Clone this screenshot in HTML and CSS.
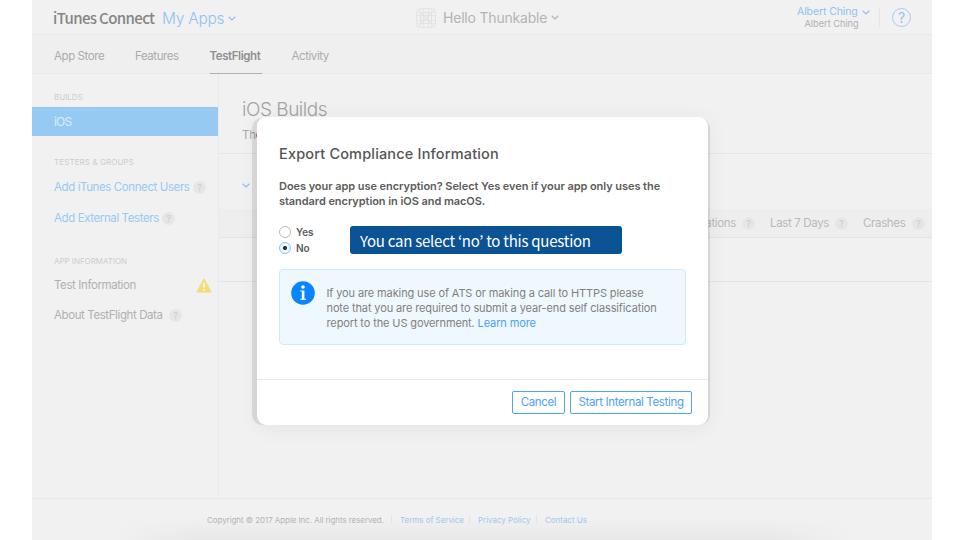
FILE: index.html
```html
<!DOCTYPE html>
<html lang="en">
<head>
<meta charset="utf-8">
<title>iTunes Connect</title>
<link rel="stylesheet" href="styles.css">
</head>
<body>
<div class="page">
  <header class="top">
    <div class="brand"><span class="logo">iTunes Connect</span><span class="apps">My Apps</span><svg class="chev blue" viewBox="0 0 8 5"><path d="M.7.8 4 3.9 7.3.8"/></svg></div>
    <div class="app">
      <svg class="appicon" viewBox="0 0 20 20"><rect x=".5" y=".5" width="19" height="19" rx="4"/><path d="M4.5 1v18M7.5 1v18M12.5 1v18M15.5 1v18M1 4.5h18M1 7.5h18M1 12.5h18M1 15.5h18M2 2l16 16M18 2 2 18" opacity=".7"/><circle cx="10" cy="10" r="5.5"/><circle cx="10" cy="10" r="2.2"/></svg>
      <span class="appname">Hello Thunkable</span><svg class="chev grey" viewBox="0 0 8 5"><path d="M.7.8 4 3.9 7.3.8"/></svg>
    </div>
    <div class="account">
      <div class="who"><div class="user"><span>Albert Ching</span><svg class="chev blue" viewBox="0 0 8 5"><path d="M.7.8 4 3.9 7.3.8"/></svg></div><div class="team">Albert Ching</div></div>
      <i class="rule"></i><span class="help">?</span>
    </div>
  </header>
  <nav class="tabs"><a class="t1">App Store</a><a class="t2">Features</a><a class="t3 on">TestFlight</a><a class="t4">Activity</a></nav>
  <div class="body">
    <aside class="side">
      <h4 class="h-builds">BUILDS</h4>
      <div class="active">iOS</div>
      <h4 class="h-test">TESTERS &amp; GROUPS</h4>
      <div class="item link i1"><span>Add iTunes Connect Users</span><b class="q">?</b></div>
      <div class="item link i2"><span>Add External Testers</span><b class="q">?</b></div>
      <h4 class="h-info">APP INFORMATION</h4>
      <div class="item i3"><span>Test Information</span><svg class="warn" viewBox="0 0 16 15"><path d="M8 1 15 14H1Z" fill="#f2dc7c" stroke="#f2dc7c" stroke-width="1.2" stroke-linejoin="round"/><path d="M8 4.8v4.6M8 11v1.7" stroke="#fff" stroke-width="1.4"/></svg></div>
      <div class="item i4"><span>About TestFlight Data</span><b class="q">?</b></div>
    </aside>
    <main class="main">
      <div class="intro"><h1>iOS Builds</h1><p>Th<span class="dark">e</span></p></div>
      <div class="group"><svg class="chev blue" viewBox="0 0 8 5"><path d="M.7.8 4 3.9 7.3.8"/></svg></div>
      <div class="thead"><span class="c1">Installations</span><b class="q">?</b><span class="c2">Last 7 Days</span><b class="q">?</b><span class="c3">Crashes</span><b class="q">?</b></div>
      <div class="row"></div>
    </main>
  </div>
  <footer class="foot"><span class="f1">Copyright © 2017 Apple Inc. All rights reserved.</span><a class="f2">Terms of Service</a><a class="f3">Privacy Policy</a><a class="f4">Contact Us</a></footer>
</div>
<div class="ghost"></div>
<section class="modal">
  <div class="content">
    <h2>Export Compliance Information</h2>
    <div class="ask"><div class="a1">Does your app use encryption? Select Yes even if your app only uses the</div><div class="a2">standard encryption in iOS and macOS.</div></div>
    <div class="choice">
      <div class="radios">
        <div class="opt"><i class="radio"></i><span>Yes</span></div>
        <div class="opt"><i class="radio sel"></i><span>No</span></div>
      </div>
      <div class="callout"><span>You can select ‘no’ to this question</span></div>
    </div>
    <div class="note">
      <svg class="info" viewBox="0 0 24 24"><circle cx="12" cy="12" r="11.8" fill="#0a84ff"/><circle cx="12" cy="6" r="1.8" fill="#fff"/><path d="M9.4 9.4h4v8.4h1.6v1H9.2v-1h1.6v-7.4H9.4Z" fill="#fff"/></svg>
      <div class="lines"><div class="n1">If you are making use of ATS or making a call to HTTPS please</div><div class="n2">note that you are required to submit a year-end self classification</div><div class="n3">report to the US government. <a>Learn more</a></div></div>
    </div>
  </div>
  <div class="actions"><button class="b1">Cancel</button><button class="b2">Start Internal Testing</button></div>
</section>
</body>
</html>
```

FILE: styles.css
```css
* { box-sizing: border-box; }
body { margin: 0; width: 960px; height: 540px; overflow: hidden; background: #fff; font-family: Inter, "Liberation Sans", sans-serif; color: #a9a9a9; position: relative; }
h1, h2, h4, p { margin: 0; font-weight: 400; }
span, a, div { white-space: nowrap; }
.page { margin-left: 32px; width: 900px; height: 540px; background: #f1f1f1; display: flex; flex-direction: column; }
.chev { width: 8px; height: 5px; fill: none; stroke-width: 1.2; flex: none; }
.blue { stroke: #8fc1f3; }
.grey { stroke: #b4b4b4; }

.top { height: 35px; border-bottom: 1px solid #e9e9e9; display: grid; grid-template-columns: 384px 340px 1fr; flex: none; }
.brand { display: flex; align-items: center; padding: 2px 0 0 21px; }
.logo { font: 500 15px/20px "Noto Sans CJK KR", sans-serif; color: #858585; letter-spacing: -.62px; width: 109px; }
.apps { font-size: 15.5px; font-weight: 300; color: #8fc1f3; width: 66px; letter-spacing: -.25px; }
.app { display: flex; align-items: center; padding-top: 1px; }
.appicon { width: 20px; height: 20px; fill: none; stroke: #dcdcdc; stroke-width: .7; margin-right: 7px; }
.appname { font-size: 14px; color: #b4b4b4; width: 108px; letter-spacing: -.2px; }
.account { display: flex; align-items: center; padding: 1px 0 0 41px; }
.who { width: 73px; }
.user { display: flex; align-items: center; gap: 4px; font-size: 10.5px; line-height: 12px; color: #8fc1f3; letter-spacing: -.1px; }
.team { font-size: 9.2px; line-height: 11px; padding-left: 7.5px; color: #b0b0b0; }
.rule { width: 1px; height: 19px; background: #e6e6e6; margin-left: 9px; }
.help { width: 19px; height: 19px; border: 1px solid #a4cdf5; border-radius: 50%; color: #8fc1f3; font-size: 14px; line-height: 17px; text-align: center; margin-left: 12px; }

.tabs { height: 39px; flex: none; border-bottom: 1px solid #e7e7e7; background: #efefef; display: flex; padding-left: 22px; font-size: 11.5px; line-height: 42px; color: #ababab; letter-spacing: -.42px; }
.tabs a { height: 39px; }
.t1 { width: 81px; } .t2 { width: 74.5px; }
.t3 { width: 52px; margin-right: 30px; }
.on { color: #909090; font-weight: 600; border-bottom: 1px solid #b0b0b0; }

.body { flex: none; height: 425px; display: flex; border-bottom: 1px solid #e8e8e8; padding-bottom: 3px; }
.side { width: 187px; border-right: 1px solid #e9e9e9; display: flex; flex-direction: column; }
.side h4 { font-size: 8px; line-height: 12px; padding-left: 22px; color: #cdcdcd; flex: none; }
.h-builds { margin-top: 17px; }
.active { margin-top: 4px; height: 29px; background: #97caf2; color: #dcedfa; font-size: 12px; line-height: 30px; padding-left: 22px; flex: none; letter-spacing: -.8px; }
.side .h-test { margin-top: 20px; letter-spacing: .1px; }
.item { display: flex; align-items: center; height: 20px; padding-left: 22px; font-size: 11.5px; color: #b0b0b0; flex: none; letter-spacing: -.4px; }
.link { color: #98c9f2; }
.i1 { margin-top: 9px; } .i2 { margin-top: 11px; }
.side .h-info { margin-top: 27px; letter-spacing: -.04px; }
.i3 { margin-top: 8px; } .i4 { margin-top: 10px; }
.i1 span { width: 139px; } .i2 span { width: 108px; } .i3 span { width: 142px; } .i4 span { width: 115px; }
.q { width: 13px; height: 13px; border-radius: 50%; background: #e6e6e6; color: #c9c9c9; font-size: 9px; line-height: 13px; font-weight: 400; text-align: center; flex: none; letter-spacing: 0; }
.warn { width: 16px; height: 15px; }
.main { flex: 1; }
.intro { height: 80px; border-bottom: 1px solid #e6e6e6; padding: 23px 0 0 23px; }
h1 { font-size: 19px; line-height: 26px; font-weight: 300; color: #a3a3a3; letter-spacing: -.48px; }
.intro p { font-size: 11.5px; line-height: 14px; margin-top: 5px; letter-spacing: -.2px; }
.dark { color: #555; }
.group { height: 55px; padding: 29px 0 0 23px; }
.group svg { display: block; }
.thead { height: 29px; background: #eee; border-bottom: 1px solid #e4e4e4; display: flex; align-items: center; justify-content: flex-end; padding-right: 7px; font-size: 11.5px; color: #b9b9b9; letter-spacing: -.35px; }
.c1 { margin-right: 6px; } .c2 { width: 59px; margin: 0 6px 0 15px; } .c3 { width: 43px; margin: 0 6px 0 15px; }
.c2, .c3 { flex: none; }
.row { height: 44px; border-bottom: 1px solid #e4e4e4; }
.foot { flex: 1; display: flex; align-items: center; padding: 1px 0 0 175px; font-size: 8px; letter-spacing: -.07px; color: #b4b4b4; background: linear-gradient(90deg, #f1f1f1 80px, transparent 160px, transparent 740px, #f1f1f1 820px), linear-gradient(#f1f1f1 45%, #e8e8e8); }
.foot a { color: #9cc8f2; border-left: 1px solid #e6e6e6; padding-left: 8px; line-height: 10px; letter-spacing: -.03px; }
.f1 { width: 184px; } .f2 { width: 78px; } .f3 { width: 67px; }

.ghost { position: absolute; left: 252px; top: 118px; width: 458px; height: 307px; border-radius: 10px; background: rgba(0,0,0,.09); }
.modal { position: absolute; left: 257px; top: 117px; width: 451px; height: 308px; border-radius: 9px; background: #fff; box-shadow: 0 3px 22px rgba(0,0,0,.06); display: flex; flex-direction: column; color: #4a4a4a; }
.content { height: 263px; border-bottom: 1px solid #e8e8e8; padding: 27px 22px 0; flex: none; }
h2 { font-size: 14.5px; line-height: 20px; font-weight: 500; color: #555; letter-spacing: .17px; }
.ask { margin-top: 15px; font-size: 11px; line-height: 15px; font-weight: 600; color: #5c5c5c; letter-spacing: -.06px; }
.choice { display: flex; margin-top: 16px; height: 32px; }
.radios { width: 71px; margin-top: -1px; }
.opt { display: flex; align-items: center; height: 16px; gap: 5px; font-size: 10px; font-weight: 600; color: #5c5c5c; }
.radio { width: 12px; height: 12px; border: 1px solid #bbb; border-radius: 50%; background: #fff; }
.sel { border-color: #8cc4f5; background: radial-gradient(circle, #333 1.7px, #eaf5ff 2.4px); }
.callout { width: 272px; height: 28px; margin-top: 1px; border-radius: 3px; background: #0b5394; color: #fff; font: 400 15px/29px "Noto Sans CJK KR", sans-serif; padding-left: 10px; letter-spacing: -.25px; }
.note { height: 76px; margin-top: 12px; width: 407px; border: 1px solid #d0e8fb; border-radius: 4px; background: #f0f8ff; display: flex; padding: 11px 0 0 11px; }
.info { width: 24px; height: 24px; flex: none; }
.lines { margin: 5px 0 0 11.5px; font-size: 11px; line-height: 15px; color: #808080; letter-spacing: -.12px; }
.lines a { color: #4a9ff5; }
.actions { display: flex; gap: 5px; justify-content: flex-end; padding: 11px 16px 0 0; }
.actions button { height: 23px; padding: 0; border: 1px solid #4ea2f8; border-radius: 2px; background: #fff; color: #4ea2f8; font: 400 11.5px/21px Inter, sans-serif; white-space: nowrap; letter-spacing: -.35px; }
.b1 { width: 53px; } .b2 { width: 122px; }
```
